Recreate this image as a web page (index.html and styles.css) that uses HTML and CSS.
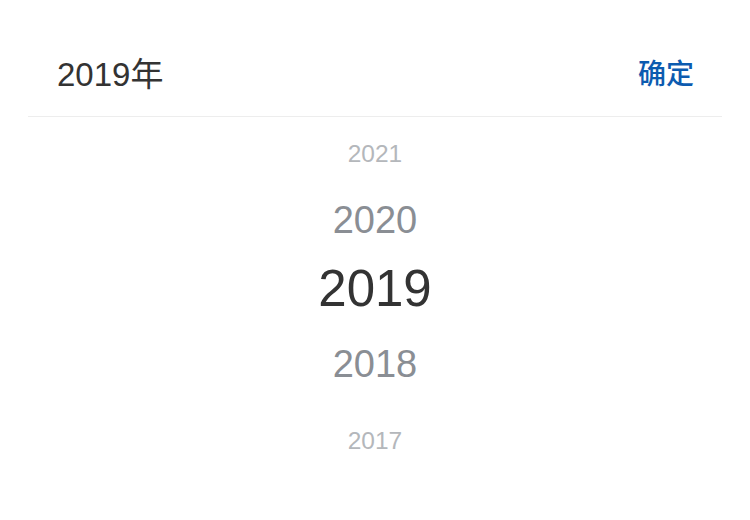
FILE: index.html
```html
<!DOCTYPE html>
<html lang="zh">
<head>
<meta charset="utf-8">
<title>年份选择</title>
<link rel="stylesheet" href="styles.css">
</head>
<body>
<div class="picker">
  <div class="header">
    <span class="title">2019年</span>
    <span class="confirm">确定</span>
  </div>
  <div class="wheel">
    <div class="item far top">2021</div>
    <div class="item near top">2020</div>
    <div class="item current">2019</div>
    <div class="item near bottom">2018</div>
    <div class="item far bottom">2017</div>
  </div>
</div>
</body>
</html>
```

FILE: styles.css
```css
html, body {
  margin: 0;
  padding: 0;
  background: #ffffff;
}

body {
  font-family: "Liberation Sans", Arial, "Noto Sans CJK SC", sans-serif;
  width: 750px;
  height: 520px;
  overflow: hidden;
}

.picker {
  display: flex;
  flex-direction: column;
}

.header {
  margin: 0 28px;
  height: 88px;
  padding: 28px 28px 0 29px;
  display: flex;
  align-items: center;
  justify-content: space-between;
  border-bottom: 1px solid #ededed;
}

.title {
  font-size: 33px;
  color: #333333;
}

.confirm {
  font-family: "Noto Sans CJK SC", sans-serif;
  font-size: 28px;
  font-weight: 500;
  color: #0c5bb0;
}

.wheel {
  display: flex;
  flex-direction: column;
  align-items: center;
}

.item {
  text-align: center;
}

.far {
  font-size: 24.5px;
  color: #b4b7bb;
}

.near {
  font-size: 38px;
  color: #8a8e94;
}

.current {
  font-size: 51px;
  color: #333333;
  height: 75px;
  line-height: 75px;
}

.far.top {
  height: 73px;
  line-height: 73px;
}

.near.top {
  height: 61px;
  line-height: 61px;
}

.near.bottom {
  height: 77px;
  line-height: 77px;
}

.far.bottom {
  height: 75px;
  line-height: 75px;
}
```
